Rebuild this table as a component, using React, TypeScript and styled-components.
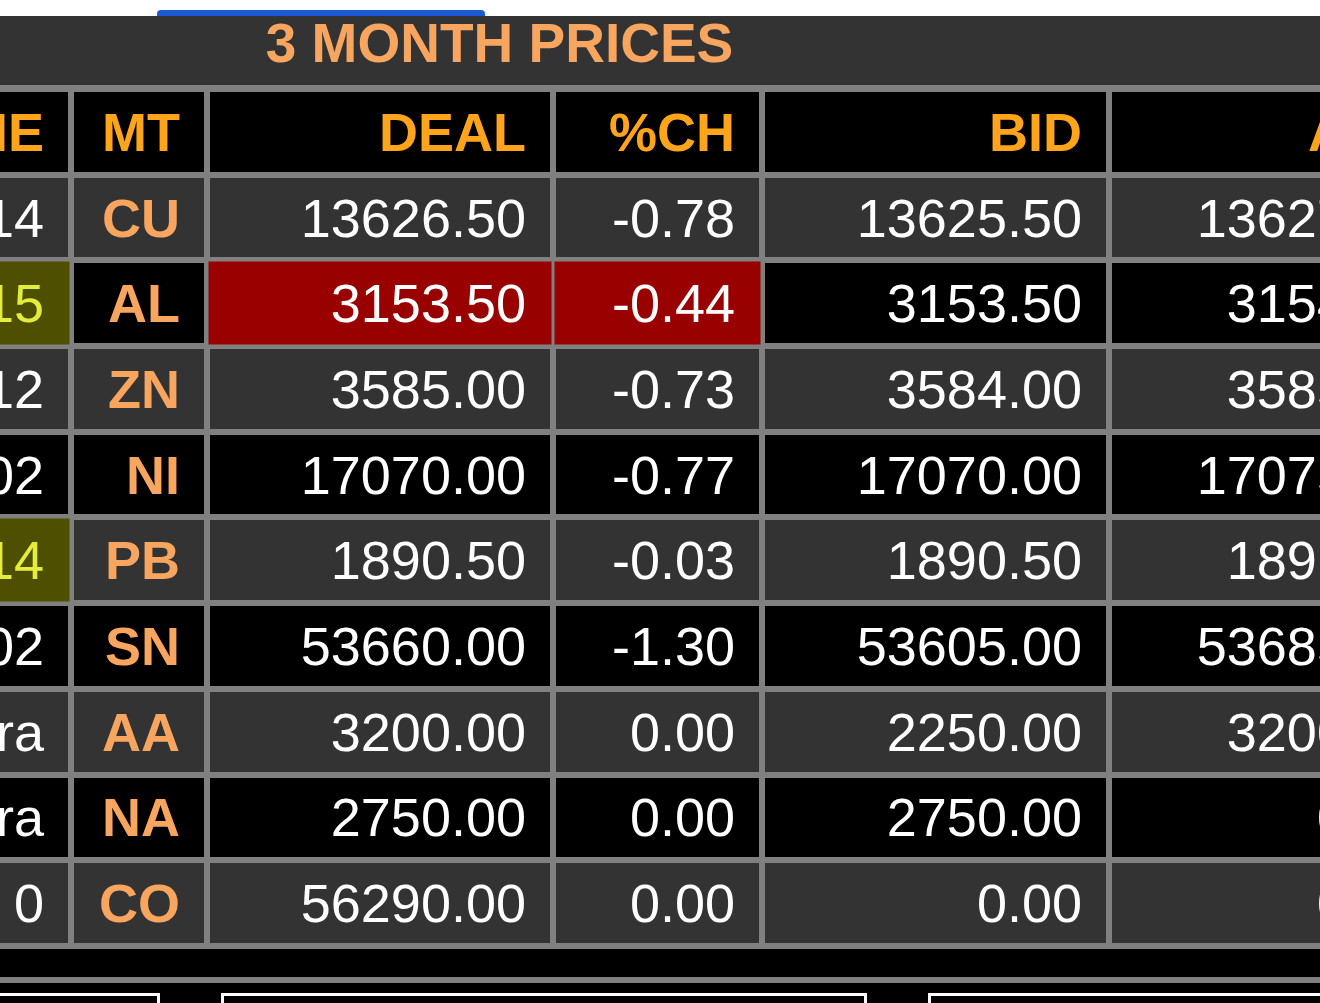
import React, { useLayoutEffect, useRef } from 'react';
import styled, { createGlobalStyle, css } from 'styled-components';

const GlobalStyle = createGlobalStyle`
  html, body {
    margin: 0;
    padding: 0;
    background: #000;
    overflow: hidden;
  }
  * {
    box-sizing: border-box;
  }
`;

const Page = styled.div`
  width: 1320px;
  height: 1003px;
  overflow: hidden;
  background: #000;
  font-family: 'Liberation Sans', Arial, Helvetica, sans-serif;
`;

const TabStrip = styled.div`
  height: 16px;
  background: #fff;
  display: flex;
  align-items: flex-end;
  padding-left: 157px;
`;

const TabIndicator = styled.div`
  width: 328px;
  height: 6px;
  background: #1c5ad4;
  border-radius: 4px 4px 0 0;
`;

// the board is wider than the screen, it is scrolled sideways
const Scroller = styled.div`
  width: 100%;
  overflow: hidden;
`;

const Board = styled.div`
  width: max-content;
  display: flex;
  flex-direction: column;
`;

const TitleBar = styled.div`
  height: 69px;
  padding-bottom: 15px;
  background: #333;
  display: flex;
  align-items: center;
  justify-content: center;
  color: #f8a55f;
  font-size: 55px;
  font-weight: 700;
  line-height: 1;
  white-space: nowrap;
`;

const Grid = styled.div`
  display: grid;
  grid-template-columns: 309px 200px 130px 340px 203px 341px 334px;
  grid-template-rows: repeat(10, 79.7px) 28px;
  gap: 6px;
  padding: 7px 6px 6px;
  background: #808080;
`;

type Tone = 'dark' | 'black' | 'olive' | 'red';
type Kind = 'head' | 'code' | 'value';

const toneBg: Record<Tone, string> = {
  dark: '#333333',
  black: '#000000',
  olive: '#4f4f00',
  red: '#990000',
};

const Cell = styled.div<{ $tone: Tone; $kind: Kind }>`
  display: flex;
  align-items: center;
  justify-content: flex-end;
  padding: 0 24px;
  overflow: hidden;
  white-space: nowrap;
  font-size: 54px;
  line-height: 1;
  background: ${(p) => toneBg[p.$tone]};
  color: #fff;
  ${(p) =>
    p.$kind === 'head' &&
    css`
      color: #ffa41b;
      font-weight: 700;
    `}
  ${(p) =>
    p.$kind === 'code' &&
    css`
      color: #f8a55f;
      font-weight: 700;
    `}
  ${(p) =>
    p.$tone === 'olive' &&
    css`
      color: #e4ec3c;
    `}
  ${(p) =>
    (p.$tone === 'olive' || p.$tone === 'red') &&
    css`
      box-shadow: 0 0 0 1.5px ${toneBg[p.$tone]};
    `}
`;

const FooterBand = styled.div`
  grid-column: 1 / -1;
  background: #000;
`;

const ControlRow = styled.div`
  display: flex;
  gap: 61px;
  height: 80px;
  padding-top: 10px;
  background: #000;
`;

const ControlBox = styled.div<{ $width?: number; $open?: 'left' | 'right' }>`
  height: 60px;
  border: 3px solid #fff;
  background: #000;
  ${(p) => (p.$width ? `width: ${p.$width}px; flex: none;` : 'flex: 1;')}
  ${(p) => p.$open === 'left' && 'border-left: none;'}
  ${(p) => p.$open === 'right' && 'border-right: none;'}
`;

type Row = {
  name: string;
  time: string;
  mt: string;
  deal: string;
  ch: string;
  bid: string;
  ask: string;
  timeFlag?: boolean;
  dealFlag?: boolean;
};

const rows: Row[] = [
  { name: 'Copper', time: '10:14', mt: 'CU', deal: '13626.50', ch: '-0.78', bid: '13625.50', ask: '13627.50' },
  { name: 'Aluminium', time: '10:15', mt: 'AL', deal: '3153.50', ch: '-0.44', bid: '3153.50', ask: '3154.50', timeFlag: true, dealFlag: true },
  { name: 'Zinc', time: '10:12', mt: 'ZN', deal: '3585.00', ch: '-0.73', bid: '3584.00', ask: '3585.50' },
  { name: 'Nickel', time: '10:02', mt: 'NI', deal: '17070.00', ch: '-0.77', bid: '17070.00', ask: '17075.00' },
  { name: 'Lead', time: '10:14', mt: 'PB', deal: '1890.50', ch: '-0.03', bid: '1890.50', ask: '1891.00', timeFlag: true },
  { name: 'Tin', time: '10:02', mt: 'SN', deal: '53660.00', ch: '-1.30', bid: '53605.00', ask: '53685.00' },
  { name: 'Alloy', time: 'Extra', mt: 'AA', deal: '3200.00', ch: '0.00', bid: '2250.00', ask: '3200.00' },
  { name: 'NASAAC', time: 'Extra', mt: 'NA', deal: '2750.00', ch: '0.00', bid: '2750.00', ask: '0.00' },
  { name: 'Cobalt', time: '0', mt: 'CO', deal: '56290.00', ch: '0.00', bid: '0.00', ask: '0.00' },
];

const headers = ['NAME', 'TIME', 'MT', 'DEAL', '%CH', 'BID', 'ASK'];

export default function App() {
  const scrollRef = useRef<HTMLDivElement>(null);

  useLayoutEffect(() => {
    if (scrollRef.current) scrollRef.current.scrollLeft = 453;
  }, []);

  return (
    <Page>
      <GlobalStyle />
      <TabStrip>
        <TabIndicator />
      </TabStrip>
      <Scroller ref={scrollRef}>
        <Board>
          <TitleBar>3 MONTH PRICES</TitleBar>
          <Grid>
            {headers.map((h) => (
              <Cell key={h} $tone="black" $kind="head">
                {h}
              </Cell>
            ))}
            {rows.map((r, i) => {
              const base: Tone = i % 2 === 0 ? 'dark' : 'black';
              return (
                <React.Fragment key={r.mt}>
                  <Cell $tone={base} $kind="value">{r.name}</Cell>
                  <Cell $tone={r.timeFlag ? 'olive' : base} $kind="value">{r.time}</Cell>
                  <Cell $tone={base} $kind="code">{r.mt}</Cell>
                  <Cell $tone={r.dealFlag ? 'red' : base} $kind="value">{r.deal}</Cell>
                  <Cell $tone={r.dealFlag ? 'red' : base} $kind="value">{r.ch}</Cell>
                  <Cell $tone={base} $kind="value">{r.bid}</Cell>
                  <Cell $tone={base} $kind="value">{r.ask}</Cell>
                </React.Fragment>
              );
            })}
            <FooterBand />
          </Grid>
        </Board>
      </Scroller>
      <ControlRow>
        <ControlBox $width={160} $open="left" />
        <ControlBox $width={646} />
        <ControlBox $open="right" />
      </ControlRow>
    </Page>
  );
}
